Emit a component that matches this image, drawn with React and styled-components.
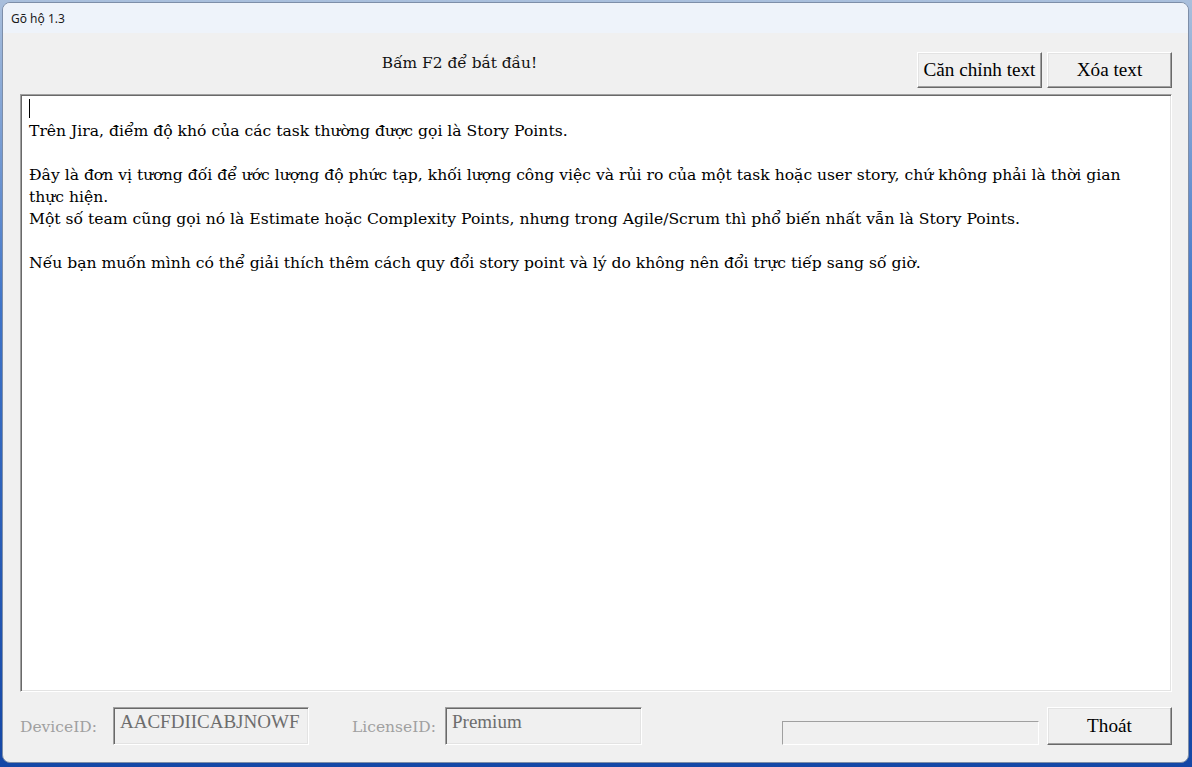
import React from "react";
import styled, { createGlobalStyle } from "styled-components";

const Global = createGlobalStyle`
  html, body {
    margin: 0;
    padding: 0;
    width: 1192px;
    height: 767px;
    overflow: hidden;
    background: linear-gradient(180deg, #a9bfdc 0%, #3f74c8 40%, #1447a6 100%);
  }
`;

const Window = styled.div`
  box-sizing: border-box;
  margin: 2px 0 0 2px;
  width: 1187px;
  height: 761px;
  display: flex;
  flex-direction: column;
  background: #f0f0f0;
  border: 1px solid #7d8ea8;
  border-radius: 8px;
  overflow: hidden;
`;

const TitleBar = styled.div`
  height: 30px;
  flex: none;
  display: flex;
  align-items: center;
  padding-left: 8px;
  background: #eef3fa;
  font-family: "Noto Sans", "Open Sans", sans-serif;
  font-size: 12px;
  color: #1a1a1a;
`;

const Body = styled.div`
  flex: 1;
  display: flex;
  flex-direction: column;
  padding: 0 16px 16px 17px;
`;

const Header = styled.div`
  height: 61px;
  flex: none;
  display: flex;
  align-items: flex-end;
  padding-bottom: 6px;
  box-sizing: border-box;
`;

const Heading = styled.div`
  flex: 1;
  align-self: flex-start;
  margin-top: 21px;
  padding-right: 18px;
  text-align: center;
  font-family: "DejaVu Serif", "Liberation Serif", serif;
  font-size: 15.4px;
  color: #111;
`;

const Button = styled.button`
  box-sizing: border-box;
  width: 125px;
  height: ${(p) => p.$h || 36}px;
  margin-left: ${(p) => p.$gap || 0}px;
  background: #f0f0f0;
  border: none;
  border-top: 1px solid #ffffff;
  border-left: 1px solid #ffffff;
  border-right: 1px solid #696969;
  border-bottom: 1px solid #696969;
  box-shadow: inset -1px -1px 0 #a0a0a0, inset 1px 1px 0 #e3e3e3;
  font-family: "Liberation Serif", serif;
  font-size: 19.2px;
  color: #000;
  padding: 0;
  cursor: default;
`;

const Editor = styled.div`
  box-sizing: border-box;
  height: 598px;
  flex: none;
  background: #fff;
  border-top: 1px solid #a0a0a0;
  border-left: 1px solid #a0a0a0;
  border-right: 1px solid #ffffff;
  border-bottom: 1px solid #ffffff;
  box-shadow: inset 1px 1px 0 #696969, inset -1px -1px 0 #e3e3e3;
  padding: 3px 6px 0 8px;
  font-family: "DejaVu Serif", "Liberation Serif", serif;
  font-size: 15.6px;
  line-height: 22px;
  color: #000;
`;

const Line = styled.div`
  white-space: pre;
  height: 22px;
`;

const Caret = styled.span`
  display: inline-block;
  width: 0;
  height: 19px;
  border-left: 1px solid #000;
  vertical-align: -4px;
`;

const Footer = styled.div`
  margin-top: 15px;
  height: 38px;
  display: flex;
  align-items: stretch;
`;

const Label = styled.div`
  display: flex;
  align-items: center;
  padding-top: 2px;
  width: ${(p) => p.$w}px;
  margin-left: ${(p) => p.$ml || 0}px;
  font-family: "DejaVu Serif", "Liberation Serif", serif;
  font-size: 15.5px;
  color: #a0a0a0;
`;

const Field = styled.div`
  box-sizing: border-box;
  width: ${(p) => p.$w}px;
  padding: 3px 6px 0;
  border-top: 1px solid #a0a0a0;
  border-left: 1px solid #a0a0a0;
  border-right: 1px solid #ffffff;
  border-bottom: 1px solid #ffffff;
  box-shadow: inset 1px 1px 0 #696969, inset -1px -1px 0 #e3e3e3;
  font-family: "Liberation Serif", serif;
  font-size: 19px;
  color: #6d6d6d;
`;

const Progress = styled.div`
  box-sizing: border-box;
  align-self: flex-end;
  margin-left: auto;
  width: 257px;
  height: 24px;
  border-top: 1px solid #a0a0a0;
  border-left: 1px solid #a0a0a0;
  border-right: 1px solid #ffffff;
  border-bottom: 1px solid #ffffff;
  background: #f0f0f0;
`;

const lines = [
  "Trên Jira, điểm độ khó của các task thường được gọi là Story Points.",
  "",
  "Đây là đơn vị tương đối để ước lượng độ phức tạp, khối lượng công việc và rủi ro của một task hoặc user story, chứ không phải là thời gian",
  "thực hiện.",
  "Một số team cũng gọi nó là Estimate hoặc Complexity Points, nhưng trong Agile/Scrum thì phổ biến nhất vẫn là Story Points.",
  "",
  "Nếu bạn muốn mình có thể giải thích thêm cách quy đổi story point và lý do không nên đổi trực tiếp sang số giờ.",
];

export default function App() {
  return (
    <>
      <Global />
      <Window>
        <TitleBar>Gõ hộ 1.3</TitleBar>
        <Body>
          <Header>
            <Heading>Bấm F2 để bắt đầu!</Heading>
            <Button>Căn chỉnh text</Button>
            <Button $gap={5}>Xóa text</Button>
          </Header>
          <Editor>
            <Line>
              <Caret />
            </Line>
            {lines.map((t, i) => (
              <Line key={i}>{t}</Line>
            ))}
          </Editor>
          <Footer>
            <Label $w={93}>DeviceID:</Label>
            <Field $w={196}>AACFDIICABJNOWF</Field>
            <Label $w={93} $ml={43}>LicenseID:</Label>
            <Field $w={197}>Premium</Field>
            <Progress />
            <Button $gap={8} $h={38}>Thoát</Button>
          </Footer>
        </Body>
      </Window>
    </>
  );
}
